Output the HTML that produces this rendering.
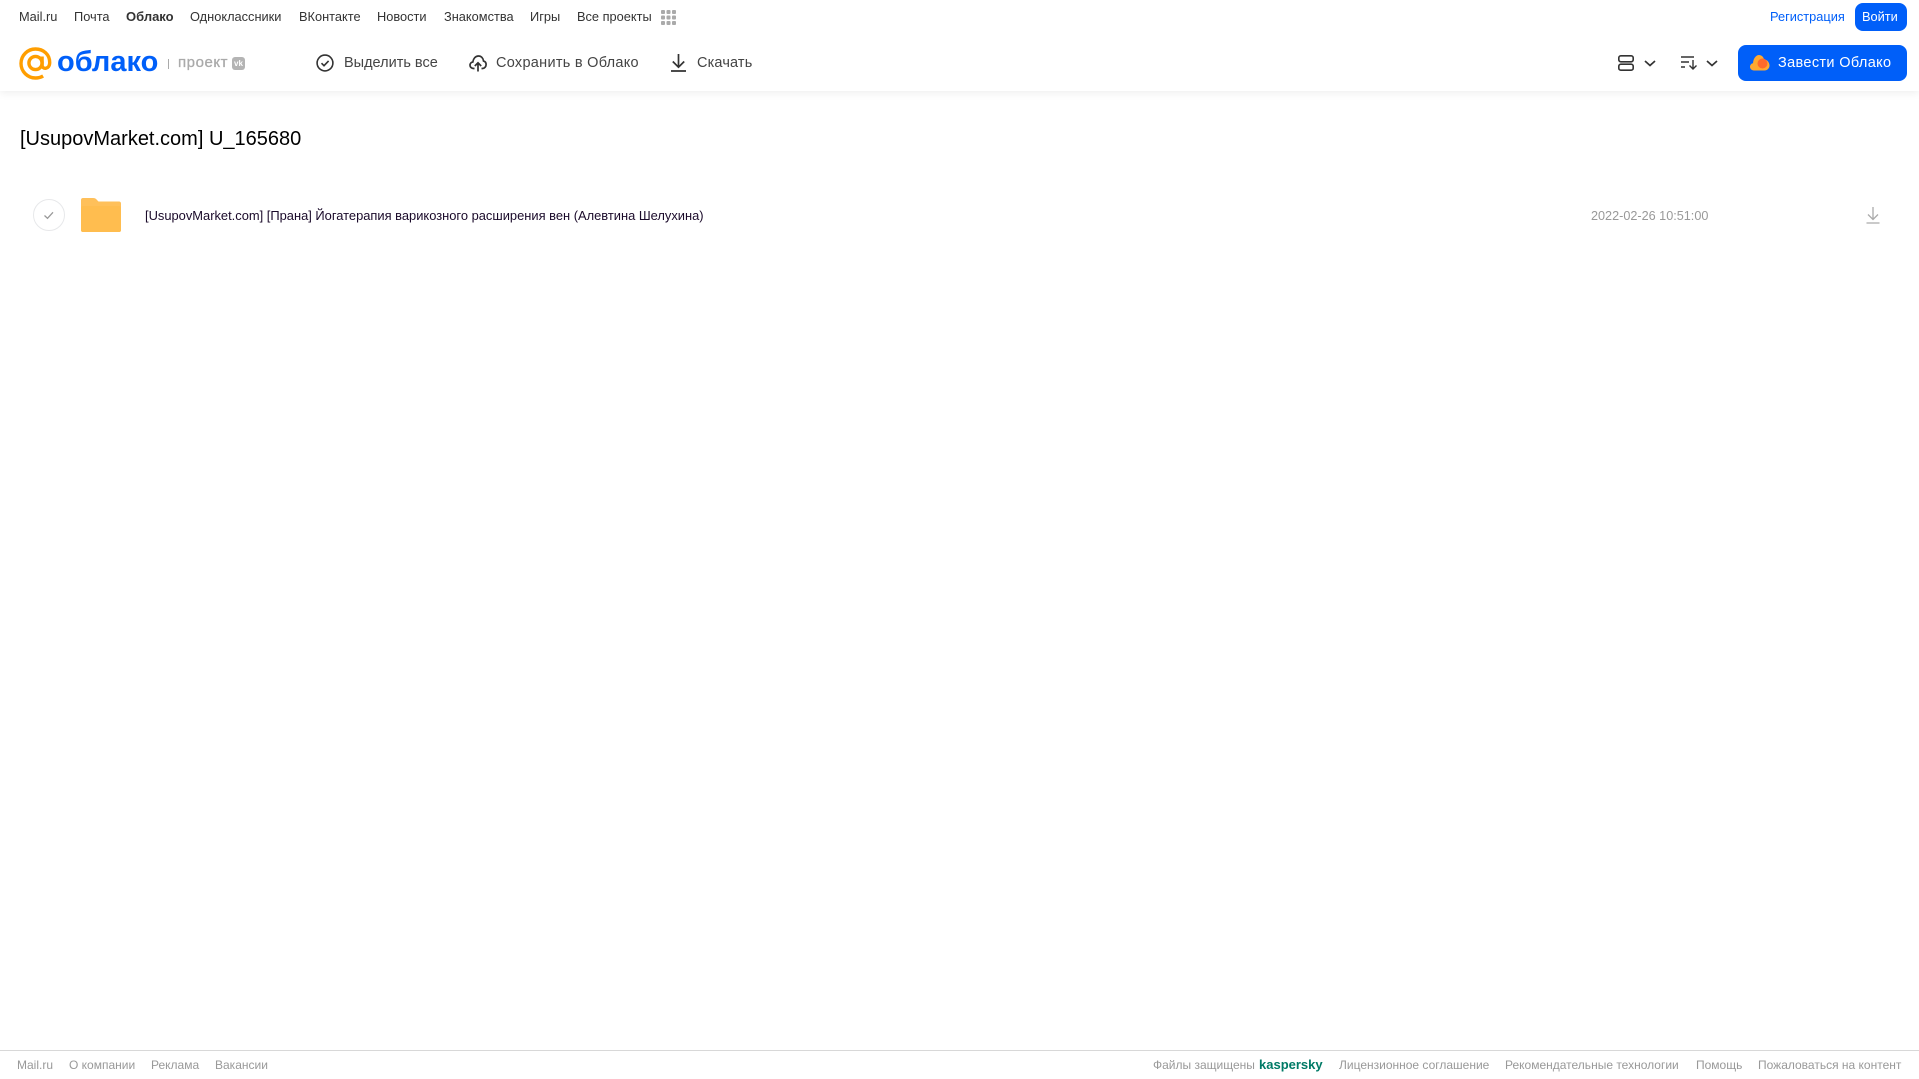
<!DOCTYPE html>
<html lang="ru"><head><meta charset="utf-8"><title>Облако</title>
<style>
html,body{margin:0;padding:0;background:#fff;width:1919px;height:1079px;overflow:hidden;font-family:"Liberation Sans",sans-serif}
.t{position:absolute;white-space:nowrap;line-height:16px}
.n{top:9px;font-size:12.8px;color:#333}
.a{top:55px;font-size:14.5px;color:#444}
.f{top:1057px;font-size:12px;color:#999}
svg{position:absolute;overflow:visible}
</style></head><body>
<div style="position:absolute;left:0;top:0;width:1919px;height:91px;background:#fff;box-shadow:0 2px 8px rgba(0,0,0,.07)"></div>

<span class="t n" style="left:19px">Mail.ru</span>
<span class="t n" style="left:74px">Почта</span>
<span class="t n" style="left:126px;font-weight:700;font-size:13px">Облако</span>
<span class="t n" style="left:190px">Одноклассники</span>
<span class="t n" style="left:299px">ВКонтакте</span>
<span class="t n" style="left:377px">Новости</span>
<span class="t n" style="left:444px">Знакомства</span>
<span class="t n" style="left:530px">Игры</span>
<span class="t n" style="left:577px">Все проекты</span>
<svg style="left:661px;top:10px" width="15" height="15" fill="#aaa"><rect width="4" height="4" rx="1"/><rect x="5.5" width="4" height="4" rx="1"/><rect x="11" width="4" height="4" rx="1"/><rect y="5.5" width="4" height="4" rx="1"/><rect x="5.5" y="5.5" width="4" height="4" rx="1"/><rect x="11" y="5.5" width="4" height="4" rx="1"/><rect y="11" width="4" height="4" rx="1"/><rect x="5.5" y="11" width="4" height="4" rx="1"/><rect x="11" y="11" width="4" height="4" rx="1"/></svg>

<span class="t n" style="left:1770px;color:#005ff9">Регистрация</span>
<div style="position:absolute;left:1855px;top:3px;width:52px;height:28px;border-radius:8px;background:#005ff9"></div>
<span class="t n" style="left:1862px;color:#fff">Войти</span>

<svg style="left:19px;top:47px" width="33" height="33" viewBox="0 0 33 33" fill="none" stroke="#ff9e00" stroke-width="3.4"><circle cx="16.5" cy="16" r="6.6"/><path d="M23.1 9.5v8.5c0 5 7.6 4.500 7.600-2.500C30.700 7.500 24.500 2 16.500 2 8.500 2 2 8.500 2 16.500S8.500 31 16.500 31c3.200 0 5.600-.8 7.600-2"/></svg>
<span class="t" style="left:57px;top:44px;font-size:29px;line-height:36px;color:#005ff9;font-weight:700">облако</span>
<div style="position:absolute;left:168px;top:59px;width:1px;height:10px;background:#aaa"></div>
<span class="t" style="left:178px;top:55px;font-size:15px;color:#aaa;letter-spacing:.55px;-webkit-text-stroke:.3px #aaa">проект</span>
<div style="position:absolute;left:232px;top:57px;width:13px;height:13px;border-radius:3px;background:#b4b4b4;color:#fff;font-size:8px;font-weight:700;line-height:13px;text-align:center">vk</div>

<svg style="left:316px;top:54px" width="18" height="18" viewBox="0 0 18 18" fill="none" stroke="#333" stroke-width="1.6"><circle cx="9" cy="9" r="7.9"/><path d="M5.5 9.2l2.5 2.5 4.600-4.800"/></svg>
<span class="t a" style="left:344px">Выделить все</span>
<svg style="left:469px;top:54px" width="18" height="18" viewBox="0 0 18 18" fill="none" stroke="#333" stroke-width="1.7"><path d="M5.500 14.500H4.500C2.500 14.500 1 13 1 11.200c0-1.700 1.200-3 2.800-3.200C4.300 4.500 6.500 2 9.500 2c2.800 0 4.700 2.200 5 5 1.500.4 2.600 1.800 2.600 3.500 0 2.200-1.600 4-3.600 4h-1M9 17.500V9M5.800 12L9 8.800l3.200 3.200"/></svg>
<span class="t a" style="left:496px;letter-spacing:.28px">Сохранить в Облако</span>
<svg style="left:670px;top:54px" width="17" height="18" viewBox="0 0 17 18" fill="none" stroke="#333" stroke-width="1.7"><path d="M8.500 0v13M2.800 7.500l5.700 5.700 5.700-5.700M1 17h15"/></svg>
<span class="t a" style="left:697px;letter-spacing:.15px">Скачать</span>

<svg style="left:1618px;top:55px" width="16" height="16" viewBox="0 0 16 16" fill="none" stroke="#333" stroke-width="1.6"><rect x=".8" y=".8" width="14.400" height="6" rx="2"/><rect x=".8" y="9.200" width="14.400" height="6" rx="2"/></svg>
<svg style="left:1644px;top:60px" width="12" height="7" fill="none" stroke="#333" stroke-width="1.7"><path d="M1 1l5 4.500L11 1"/></svg>
<svg style="left:1681px;top:56px" width="17" height="14" fill="none" stroke="#333" stroke-width="1.4"><path d="M0 1h13M0 6h8M0 11h4M12 4v9M8.500 9.500L12 13l3.500-3.500"/></svg>
<svg style="left:1706px;top:60px" width="12" height="7" fill="none" stroke="#333" stroke-width="1.7"><path d="M1 1l5 4.500L11 1"/></svg>
<div style="position:absolute;left:1738px;top:45px;width:169px;height:36px;border-radius:8px;background:#005ff9"></div>
<svg style="left:1750px;top:54px" width="20" height="17" viewBox="0 0 20 17"><path d="M4 16.500C1.500 16.500 0 14.800 0 12.800 0 11 1.200 9.500 3 9.200 3.300 4.500 6 1 9 1c2.500 0 4.500 1.800 5 4.500 3 0 5.500 2.800 5.500 6 0 2.800-2.200 5-5 5z" fill="#ffa930"/><circle cx="12.500" cy="9.500" r="5" fill="#ff6a2b"/></svg>
<span class="t a" style="left:1778px;color:#fff;letter-spacing:.35px">Завести Облако</span>

<span class="t" style="left:20px;top:127px;font-size:20px;line-height:24px;color:#000">[UsupovMarket.com] U_165680</span>

<svg style="left:33px;top:199px" width="32" height="32" fill="none"><circle cx="16" cy="16" r="15.500" stroke="#e7e8ea"/><path d="M11.500 16.500l3 2.800 5.500-6" stroke="#999" stroke-width="1.300"/></svg>
<svg style="left:81px;top:198px" width="40" height="34" viewBox="0 0 40 34"><path d="M2 0h10c2 0 3 .6 4 2l1.500 1.500H38c1.200 0 2 .8 2 2V32c0 1.200-.8 2-2 2H2c-1.200 0-2-.8-2-2V2C0 .8.800 0 2 0z" fill="#ffc05a"/><rect x="0" y="8" width="40" height="26" rx="2" fill="#ffbd4f"/></svg>
<span class="t" style="left:145px;top:208px;font-size:12.9px;color:#1a0a2a">[UsupovMarket.com] [Прана] Йогатерапия варикозного расширения вен (Алевтина Шелухина)</span>
<span class="t" style="left:1591px;top:208px;font-size:12.65px;color:#999">2022-02-26 10:51:00</span>
<svg style="left:1866px;top:207px" width="14" height="17" viewBox="0 0 14 17" fill="none" stroke="#aaa" stroke-width="1.300"><path d="M7 0v12.500M2 7.500l5 5 5-5M.5 16h13"/></svg>

<div style="position:absolute;left:0;top:1050px;width:1919px;height:1px;background:#d8d8d8"></div>
<span class="t f" style="left:17px">Mail.ru</span>
<span class="t f" style="left:69px">О компании</span>
<span class="t f" style="left:151px">Реклама</span>
<span class="t f" style="left:215px">Вакансии</span>
<span class="t f" style="left:1153px">Файлы защищены</span>
<span class="t f" style="left:1259px;top:1057px;font-size:13px;font-weight:700;color:#007a66">kaspersky</span>
<span class="t f" style="left:1339px">Лицензионное соглашение</span>
<span class="t f" style="left:1505px">Рекомендательные технологии</span>
<span class="t f" style="left:1696px">Помощь</span>
<span class="t f" style="left:1758px">Пожаловаться на контент</span>
</body></html>
